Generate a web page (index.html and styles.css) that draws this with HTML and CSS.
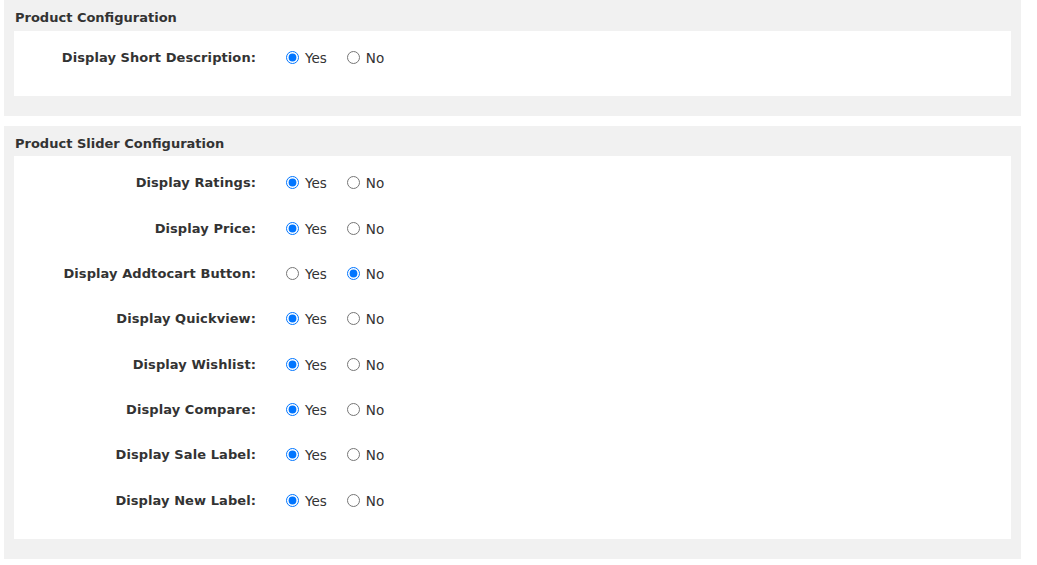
FILE: index.html
```html
<!DOCTYPE html>
<html>
<head>
<meta charset="utf-8">
<link rel="stylesheet" href="styles.css">
</head>
<body>
<div class="page">
  <section class="panel">
    <h3 class="panel-title">Product Configuration</h3>
    <div class="panel-body">
      <div class="row">
        <label class="row-label">Display Short Description:</label>
        <div class="options">
          <label class="opt"><input type="radio" name="sd" checked><span>Yes</span></label>
          <label class="opt"><input type="radio" name="sd"><span>No</span></label>
        </div>
      </div>
    </div>
  </section>
  <section class="panel">
    <h3 class="panel-title">Product Slider Configuration</h3>
    <div class="panel-body">
      <div class="row">
        <label class="row-label">Display Ratings:</label>
        <div class="options">
          <label class="opt"><input type="radio" name="r1" checked><span>Yes</span></label>
          <label class="opt"><input type="radio" name="r1"><span>No</span></label>
        </div>
      </div>
      <div class="row">
        <label class="row-label">Display Price:</label>
        <div class="options">
          <label class="opt"><input type="radio" name="r2" checked><span>Yes</span></label>
          <label class="opt"><input type="radio" name="r2"><span>No</span></label>
        </div>
      </div>
      <div class="row">
        <label class="row-label">Display Addtocart Button:</label>
        <div class="options">
          <label class="opt"><input type="radio" name="r3"><span>Yes</span></label>
          <label class="opt"><input type="radio" name="r3" checked><span>No</span></label>
        </div>
      </div>
      <div class="row">
        <label class="row-label">Display Quickview:</label>
        <div class="options">
          <label class="opt"><input type="radio" name="r4" checked><span>Yes</span></label>
          <label class="opt"><input type="radio" name="r4"><span>No</span></label>
        </div>
      </div>
      <div class="row">
        <label class="row-label">Display Wishlist:</label>
        <div class="options">
          <label class="opt"><input type="radio" name="r5" checked><span>Yes</span></label>
          <label class="opt"><input type="radio" name="r5"><span>No</span></label>
        </div>
      </div>
      <div class="row">
        <label class="row-label">Display Compare:</label>
        <div class="options">
          <label class="opt"><input type="radio" name="r6" checked><span>Yes</span></label>
          <label class="opt"><input type="radio" name="r6"><span>No</span></label>
        </div>
      </div>
      <div class="row">
        <label class="row-label">Display Sale Label:</label>
        <div class="options">
          <label class="opt"><input type="radio" name="r7" checked><span>Yes</span></label>
          <label class="opt"><input type="radio" name="r7"><span>No</span></label>
        </div>
      </div>
      <div class="row">
        <label class="row-label">Display New Label:</label>
        <div class="options">
          <label class="opt"><input type="radio" name="r8" checked><span>Yes</span></label>
          <label class="opt"><input type="radio" name="r8"><span>No</span></label>
        </div>
      </div>
    </div>
  </section>
</div>
</body>
</html>
```
FILE: styles.css
```css
html, body {
  margin: 0;
  padding: 0;
  background: #ffffff;
}
body {
  font-family: "DejaVu Sans", Verdana, sans-serif;
  color: #333333;
}
.page {
  width: 1017px;
  margin-left: 4px;
  display: flex;
  flex-direction: column;
  gap: 10px;
}
.panel {
  background: #f1f1f1;
  padding: 0 10px 20px 10px;
}
.panel-title {
  margin: 0;
  height: 30.5px;
  line-height: 36px;
  font-size: 13px;
  font-weight: bold;
  padding-left: 1px;
  color: #333333;
}
.panel-body {
  background: #ffffff;
  padding: 4px 0 16px 0;
}
.row {
  height: 45.3px;
  display: flex;
  align-items: center;
}
.row-label {
  width: 242px;
  text-align: right;
  font-size: 13px;
  font-weight: bold;
  letter-spacing: 0.08px;
  color: #333333;
}
.options {
  display: flex;
  align-items: center;
  margin-left: 30px;
  gap: 20px;
}
.opt {
  display: flex;
  align-items: center;
  font-size: 13.5px;
  color: #333333;
}
.opt span {
  padding-top: 1px;
}
.opt input {
  margin: 0 6px 0 0;
  width: 13px;
  height: 13px;
}
```
